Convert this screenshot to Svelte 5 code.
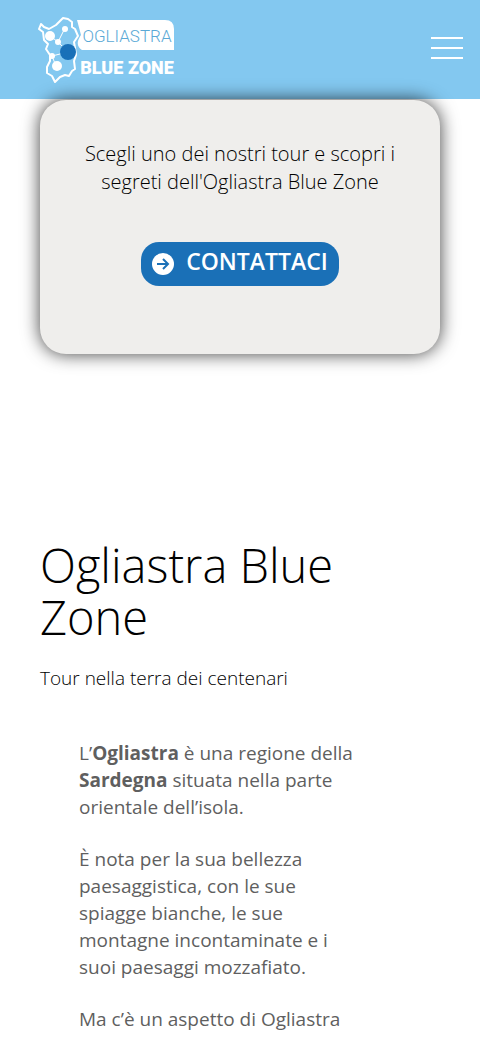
<script>
  let menuOpen = $state(false)

  const mapPath = 'M5 9 L3 14 L7 17 L8 25 L12 29 L10 34 L14 40 L14 46 L11 52 L11 58 L16 61 L19 67 L24 62 L29 60 L33 61 L36 56 L39 54 L38 46 L40 40 L39 33 L38 27 L42 21 L39 14 L36 12 L36 7 L32 4 L27 3 L20 10 L13 14 L8 12 Z'
</script>

<header class="site-header">
  <a href="/" class="logo" aria-label="Ogliastra Blue Zone">
    <svg width="140" height="70" viewBox="0 0 140 70">
      <path d="M41 5 H129 Q138 5 138 14 V35 H46 Q38 30 45 20 Z" fill="#fff" />
      <path d={mapPath} fill="#83c8f0" stroke="#fff" stroke-width="2" stroke-linejoin="round" />
      <path d="M13 20 L22 27 L29 13 M22 27 L32 37 L16 41 L20 51" fill="none" stroke="#fff" stroke-width="1" />
      <circle cx="14" cy="21" r="5" fill="#fff" />
      <circle cx="29" cy="14" r="3" fill="#fff" />
      <circle cx="22" cy="27" r="3" fill="#fff" />
      <circle cx="16" cy="41" r="3" fill="#fff" />
      <circle cx="21" cy="51" r="5" fill="#fff" />
      <circle cx="32" cy="37" r="8" fill="#1870b8" />
      <text x="91" y="27" class="logo-top">OGLIASTRA</text>
      <text x="91" y="59" class="logo-bottom">BLUE ZONE</text>
    </svg>
  </a>
  <button class="menu-toggle" aria-label="Menu" aria-expanded={menuOpen} onclick={() => menuOpen = !menuOpen}>
    <span></span>
    <span></span>
    <span></span>
  </button>
</header>

<main>
  <section class="cta">
    <div class="card">
      <p class="card-text">Scegli uno dei nostri tour e scopri i segreti dell'Ogliastra Blue Zone</p>
      <a href="/contatti" class="contact">
        <svg width="22" height="22" viewBox="0 0 22 22" aria-hidden="true">
          <circle cx="11" cy="11" r="11" fill="#fff" />
          <path d="M5 11 H16 M11 6 L16 11 L11 16" fill="none" stroke="#1a70b7" stroke-width="2" />
        </svg>
        <span>CONTATTACI</span>
      </a>
    </div>
  </section>

  <section class="intro">
    <h1>Ogliastra Blue Zone</h1>
    <h2>Tour nella terra dei centenari</h2>
    <div class="copy">
      <p>L’<strong>Ogliastra</strong> è una regione della <strong>Sardegna</strong> situata nella parte orientale dell’isola.</p>
      <p>È nota per la sua bellezza paesaggistica, con le sue spiagge bianche, le sue montagne incontaminate e i suoi paesaggi mozzafiato.</p>
      <p>Ma c’è un aspetto di Ogliastra</p>
    </div>
  </section>
</main>

<style>
  :global(body) {
    background: #fff;
    color: #000;
    font-family: "Open Sans", "Noto Sans", sans-serif;
  }

  .site-header {
    display: flex;
    align-items: center;
    justify-content: space-between;
    height: 99px;
    padding: 0 17px 0 36px;
    box-sizing: border-box;
    background: #83c8f0;
  }

  .logo,
  .logo svg {
    display: block;
  }

  .logo-top,
  .logo-bottom {
    font-family: "Roboto", sans-serif;
    text-anchor: middle;
  }

  .logo-top {
    font-size: 17px;
    font-weight: 300;
    fill: #5aa9d6;
  }

  .logo-bottom {
    font-size: 18px;
    font-weight: 900;
    fill: #fff;
  }

  .menu-toggle {
    display: flex;
    flex-direction: column;
    gap: 8px;
    padding: 0 0 4px;
    border: 0;
    background: none;
    cursor: pointer;
  }

  .menu-toggle span {
    width: 32px;
    height: 2px;
    background: #fff;
  }

  .cta {
    padding: 1px 40px 14px;
  }

  .card {
    position: relative;
    display: flex;
    flex-direction: column;
    align-items: center;
    gap: 46px;
    padding: 40px 32px 68px;
    border-radius: 26px;
    background: #efeeec;
    box-shadow: 0 0 18px rgba(0, 0, 0, 0.75);
  }

  .card-text {
    margin: 0;
    font-size: 20px;
    font-weight: 300;
    line-height: 28px;
    text-align: center;
  }

  .contact {
    display: flex;
    align-items: center;
    gap: 12px;
    height: 44px;
    padding: 0 11px;
    border-radius: 18px;
    background: #1a70b7;
    color: #fff;
    font-size: 23px;
    font-weight: 600;
    line-height: 38px;
    text-decoration: none;
  }

  .contact span {
    padding-bottom: 6px;
  }

  .intro {
    padding: 171px 40px 0;
  }

  h1 {
    margin: 0;
    font-size: 47px;
    font-weight: 300;
    line-height: 52px;
  }

  h2 {
    margin: 21px 0 0;
    font-size: 19px;
    font-weight: 300;
    line-height: 28px;
  }

  .copy {
    padding: 48px 76px 0 39px;
    color: #5f5f5f;
    font-size: 19px;
    line-height: 27px;
  }

  .copy p {
    margin: 0 0 25px;
  }
</style>
